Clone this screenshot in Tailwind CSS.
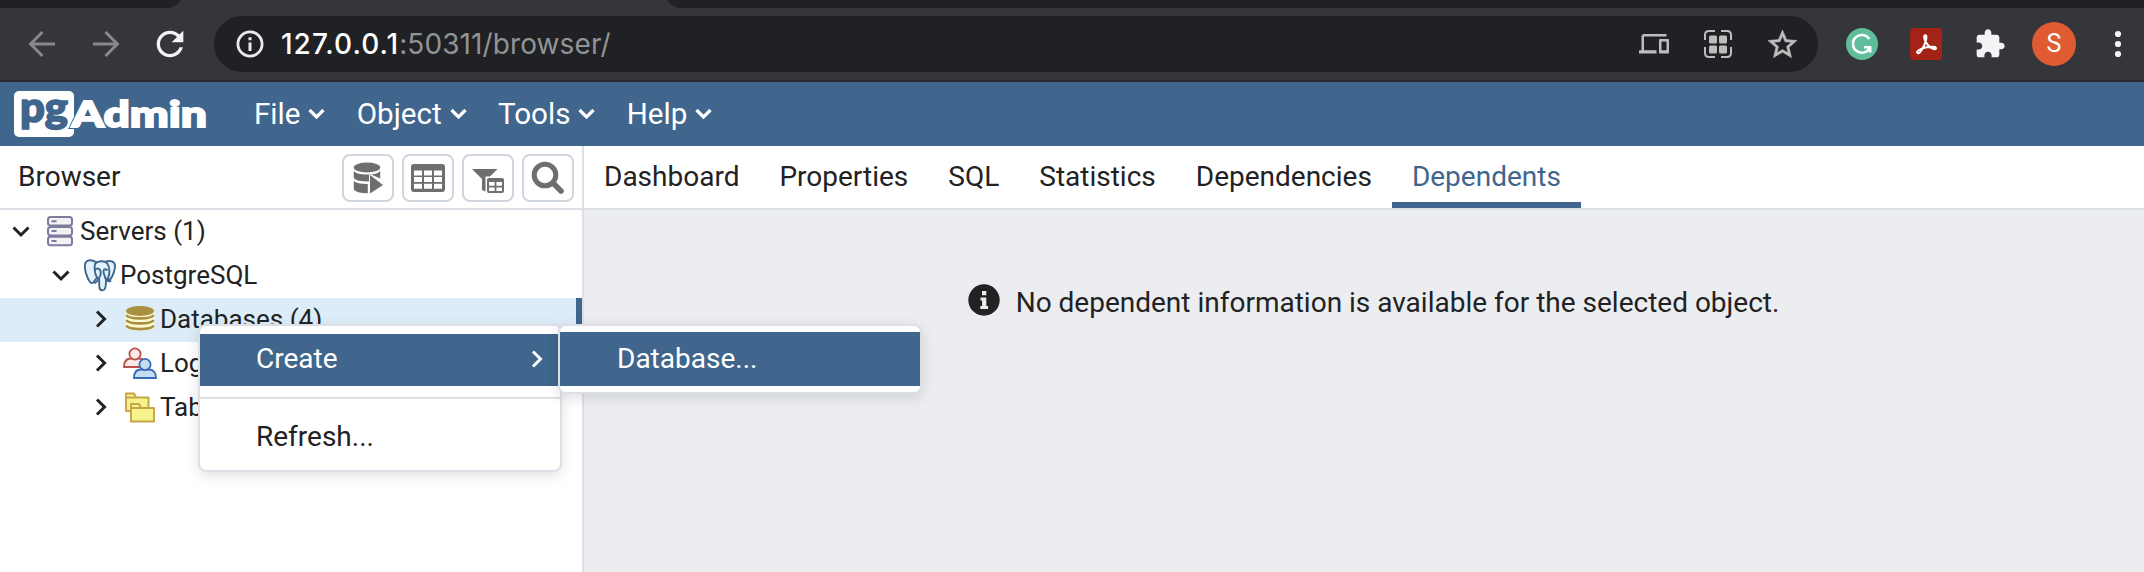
<!DOCTYPE html>
<html lang="en">
<head>
<meta charset="utf-8">
<title>pgAdmin 4</title>
<script src="https://cdn.jsdelivr.net/npm/@tailwindcss/browser@4"></script>
</head>
<body class="w-[2144px] h-[572px] overflow-hidden bg-white font-['Roboto',sans-serif] text-[28px] text-[#222222]">
<div class="relative flex h-[572px] flex-col">

  <!-- Browser tab strip -->
  <div class="flex h-2 shrink-0 justify-between overflow-hidden bg-[#35363a]">
    <div class="-mt-6 h-8 w-[183px] rounded-br-2xl bg-[#202124]"></div>
    <div class="-mt-6 h-8 w-[1479px] rounded-bl-2xl bg-[#202124]"></div>
  </div>

  <!-- Browser toolbar -->
  <div class="flex h-[74px] shrink-0 items-center border-b-2 border-[#292a2b] bg-[#35363a] pl-[10px]">
    <div class="flex w-16 justify-center"><svg class="size-8" viewBox="0 0 32 32" fill="none" stroke="#87888b" stroke-width="3"><path d="M29 16H5M16.500 4L4.600 16l11.900 12"/></svg></div>
    <div class="flex w-16 justify-center"><svg class="size-8" viewBox="0 0 32 32" fill="none" stroke="#87888b" stroke-width="3"><path d="M3 16h24M15.500 4l11.900 12-11.900 12"/></svg></div>
    <div class="flex w-16 justify-center"><svg class="size-10" viewBox="0 0 24 24" fill="#f1f3f4"><path d="M17.650 6.350C16.200 4.900 14.210 4 12 4c-4.420 0-7.990 3.580-7.990 8s3.570 8 7.990 8c3.730 0 6.840-2.550 7.730-6h-2.080c-.82 2.330-3.040 4-5.650 4-3.310 0-6-2.690-6-6s2.690-6 6-6c1.660 0 3.140.69 4.220 1.780L13 11h7V4l-2.350 2.350z"/></svg></div>
    <div class="ml-3 flex h-14 w-[1604px] items-center rounded-full bg-[#202124] pr-1 pl-[22px]">
      <svg class="size-[28px]" viewBox="0 0 28 28"><circle cx="14" cy="14" r="12.100" fill="none" stroke="#e8eaed" stroke-width="2.800"/><path d="M12.500 12.500h3V21h-3zM12.500 7.300h3v3h-3z" fill="#e8eaed"/></svg>
      <div class="ml-[17px] grow font-['Inter',sans-serif] text-[28px] leading-[56px] tracking-[0.1px] text-[#929396]"><span class="font-medium tracking-[1px] text-white">127.0.0.1</span>:50311/browser/</div>
      <div class="flex w-16 justify-center"><svg class="size-[30px]" viewBox="0 0 24 24" fill="#bdbdbd"><path d="M4 6h18V4H4c-1.100 0-2 .9-2 2v11H0v2.500h14V17H4V6zm19 2h-6c-.55 0-1 .45-1 1v9.500c0 .55.45 1 1 1h6c.55 0 1-.45 1-1V9c0-.55-.45-1-1-1zm-1 9h-4v-7h4v7z"/></svg></div>
      <div class="flex w-16 justify-center"><svg class="size-[30px]" viewBox="0 0 30 30"><path d="M2 11V6q0-4 4-4h6M18 2h6q4 0 4 4v5M28 18v6q0 4-4 4h-6M12 28H6q-4 0-4-4v-6" fill="none" stroke="#bdbdbd" stroke-width="2"/><g fill="#bdbdbd"><rect x="6" y="6.500" width="8" height="8" rx="1.500"/><rect x="16" y="6.500" width="8" height="8" rx="1.500"/><rect x="6" y="16.500" width="8" height="8" rx="1.500"/><rect x="16" y="16.500" width="8" height="8" rx="1.500"/></g></svg></div>
      <div class="flex w-16 justify-center"><svg class="size-[35px]" viewBox="0 0 24 24" fill="#bdbdbd" stroke="#bdbdbd" stroke-width=".35"><path d="M22 9.240l-7.190-.62L12 2 9.190 8.630 2 9.240l5.460 4.730L5.820 21 12 17.270 18.180 21l-1.630-7.030L22 9.240zM12 15.400l-3.760 2.270 1-4.280-3.320-2.880 4.380-.38L12 6.100l1.710 4.040 4.380.38-3.320 2.880 1 4.280L12 15.400z"/></svg></div>
    </div>
    <div class="ml-3 flex w-16 justify-center"><svg class="size-8" viewBox="0 0 32 32"><circle cx="16" cy="16" r="16" fill="#5fbd9c"/><path d="M23.300 11A8.900 8.900 0 1 0 24 19.300M18 19.200h6.200v5.400" fill="none" stroke="#fff" stroke-width="2.500"/></svg></div>
    <div class="flex w-16 justify-center"><svg class="size-8" viewBox="0 0 32 32"><rect width="32" height="32" rx="4" fill="#a32316"/><path d="M7.400 24.900c-1.400-1.700 2.600-4.200 9.200-5.600 5.900-1.200 9.700-.5 9.400 1.200-.5 2-5.600.1-9-4.600-3.300-4.500-3.400-8.700-1.700-8.600 2.200.1 1 5.900-1.700 11.200-2.400 4.900-5 7.800-6.200 6.400z" fill="none" stroke="#fff" stroke-width="2"/></svg></div>
    <div class="flex w-16 justify-center"><svg class="size-8" viewBox="0 0 24 24" fill="#f1f3f4"><path d="M20.500 11H19V7c0-1.100-.9-2-2-2h-4V3.500C13 2.120 11.880 1 10.500 1S8 2.120 8 3.500V5H4c-1.100 0-1.990.9-1.990 2v3.800H3.500c1.490 0 2.700 1.210 2.700 2.700s-1.210 2.700-2.700 2.700H2V20c0 1.100.9 2 2 2h3.800v-1.500c0-1.490 1.210-2.700 2.700-2.700 1.490 0 2.700 1.210 2.700 2.700V22H17c1.100 0 2-.9 2-2v-4h1.500c1.380 0 2.500-1.120 2.500-2.500S21.880 11 20.500 11z"/></svg></div>
    <div class="flex w-16 justify-center"><div class="size-11 rounded-full bg-[#e05b32] text-center text-[25px] leading-[44px] text-white">S</div></div>
    <div class="w-[58px] pl-7"><svg class="h-8 w-2" viewBox="0 0 8 32" fill="#f1f3f4"><circle cx="4" cy="6" r="3.100"/><circle cx="4" cy="16" r="3.100"/><circle cx="4" cy="26" r="3.100"/></svg></div>
  </div>

  <!-- pgAdmin menu bar -->
  <div class="flex h-16 shrink-0 items-center bg-[#40668d] pl-[14px] text-[29.6px] text-white">
    <svg class="h-[46px] w-[194px] shrink-0 overflow-visible" viewBox="0 0 194 46" font-family="Lato" font-weight="900">
      <rect width="60" height="46" rx="5" fill="#fff"/>
      <text x="6" y="30.500" font-size="41" textLength="48" lengthAdjust="spacingAndGlyphs" fill="#40668d" stroke="#40668d" stroke-width="1.600">pg</text>
      <path d="M54 38L68 9h5v29z" fill="#40668d"/>
      <text x="57.500" y="35.500" font-size="36.500" textLength="135.500" lengthAdjust="spacingAndGlyphs" fill="#fff" stroke="#fff" stroke-width="1.800">Admin</text>
    </svg>
    <nav class="ml-[46px] flex gap-[31.3px]">
      <div class="flex items-center gap-2">File<svg class="h-4 w-[17px]" viewBox="0 0 17 16" fill="none" stroke="#fff" stroke-width="3.200"><path d="M1.500 4L8.500 11l7-7"/></svg></div>
      <div class="flex items-center gap-2">Object<svg class="h-4 w-[17px]" viewBox="0 0 17 16" fill="none" stroke="#fff" stroke-width="3.200"><path d="M1.500 4L8.500 11l7-7"/></svg></div>
      <div class="flex items-center gap-2">Tools<svg class="h-4 w-[17px]" viewBox="0 0 17 16" fill="none" stroke="#fff" stroke-width="3.200"><path d="M1.500 4L8.500 11l7-7"/></svg></div>
      <div class="flex items-center gap-2">Help<svg class="h-4 w-[17px]" viewBox="0 0 17 16" fill="none" stroke="#fff" stroke-width="3.200"><path d="M1.500 4L8.500 11l7-7"/></svg></div>
    </nav>
  </div>

  <div class="flex grow">
    <!-- Object browser -->
    <aside class="flex w-[584px] shrink-0 flex-col border-r-2 border-[#dddfe6] bg-white">
      <div class="flex h-16 items-center gap-2 border-b-2 border-[#dddfe6] pr-2 pl-[18px]">
        <div class="grow">Browser</div>
        <div class="mt-0.5 flex h-12 w-[52px] items-center justify-center rounded-lg border-2 border-[#d0d6de]"><svg class="h-8 w-8" viewBox="0 0 32 32" fill="#6e6e6e"><ellipse cx="15" cy="5.500" rx="13.200" ry="5"/><path d="M1.800 9q2.500 3.600 13.200 3.600t13.200-3.600v7.500L17 11.600v8Q4 19.500 1.800 16z"/><path d="M1.800 19q2.500 3 14 3v9.300Q4 31 1.800 27.500z"/><path d="M18 13l13 10-13 8.500z" stroke="#fff" stroke-width="1.400" paint-order="stroke"/></svg></div>
        <div class="mt-0.5 flex h-12 w-[52px] items-center justify-center rounded-lg border-2 border-[#d0d6de]"><svg class="h-[28px] w-[34px]" viewBox="0 0 34 28"><rect width="34" height="28" rx="3" fill="#6e6e6e"/><g fill="#fff"><path d="M3 6.500h8v5H3zM13 6.500h8v5h-8zM23 6.500h8v5h-8zM3 13h8v5H3zM13 13h8v5h-8zM23 13h8v5h-8zM3 19.800h8v5H3zM13 19.800h8v5h-8zM23 19.800h8v5h-8z"/></g></svg></div>
        <div class="mt-0.5 flex h-12 w-[52px] items-center justify-center rounded-lg border-2 border-[#d0d6de]"><svg class="mt-1.5 h-6 w-8" viewBox="0 0 32 24"><path d="M0 0h25.500L15.500 10v13.500L10 21v-11z" fill="#6e6e6e"/><rect x="13.500" y="7.500" width="19" height="17" fill="#fff"/><rect x="15" y="9" width="17" height="15" rx="2" fill="#6e6e6e"/><path d="M17 13h5.600v3.700H17zM24.400 13H30v3.700h-5.600zM17 18.400h5.600v3.700H17zM24.400 18.400H30v3.700h-5.600z" fill="#fff"/></svg></div>
        <div class="mt-0.5 flex h-12 w-[52px] items-center justify-center rounded-lg border-2 border-[#d0d6de]"><svg class="h-[34px] w-[34px]" viewBox="0 0 34 34" fill="none" stroke="#6e6e6e"><circle cx="14" cy="14" r="10.800" stroke-width="5"/><path d="M22 22l8 8" stroke-width="5.500" stroke-linecap="round"/></svg></div>
      </div>
      <div class="flex flex-col text-[26px] leading-[42px]">
        <div class="flex h-11 items-center pb-0.5 pl-3"><svg class="size-[18px]" viewBox="0 0 18 18" fill="none" stroke="#222" stroke-width="3"><path d="M1.500 5.500L9 13l7.500-7.500"/></svg>
          <svg class="ml-4 h-[32px] w-7" viewBox="0 0 28 32" fill="#f2f2f4" stroke="#7d7c9c" stroke-width="2"><rect x="2" y="2" width="24" height="8.500" rx="2.500"/><rect x="2" y="11.900" width="24" height="8.500" rx="2.500"/><rect x="2" y="21.700" width="24" height="8.500" rx="2.500"/><path d="M5.500 6.200h5M5.500 16.100h5M5.500 26h5"/></svg><span class="ml-[6px]">Servers (1)</span></div>
        <div class="flex h-11 items-center pb-0.5 pl-[52px]"><svg class="size-[18px]" viewBox="0 0 18 18" fill="none" stroke="#222" stroke-width="3"><path d="M1.500 5.500L9 13l7.500-7.500"/></svg>
          <svg class="ml-[13px] size-[34px]" viewBox="0 0 34 34" fill="#e1f2fb" stroke="#40668d" stroke-width="1.900" stroke-linejoin="round" stroke-linecap="round"><path d="M13 4C8 1 3 2 2 6c-1 5 2 14 5 18 1.500 2 3 1 4-.5l3-4z"/><path d="M22 4c5-2 10-1 10 4 0 6-3 11-5 14l-6-2z"/><path d="M12 6c2-3 9-4 12-1 3 4 3 11 1 15l-2 1.500c0 4 0 7-1 9-1 2.500-5 2.500-5.500-.5-.7-3 .2-6-.5-9-4-1.500-5-11-4-15z"/><path d="M12 12c1-2 4-2 5 0s1 5-1 8c-1 2-1 3-4 5M24 12c-1-1-3-1-3.500.5-.5 3 1.500 5 2 8 1 2 3 3 5 2.500" fill="none"/></svg><span class="ml-[3px]">PostgreSQL</span></div>
        <div class="flex h-11 items-center border-r-[6px] border-[#40668d] bg-[#dcedf9] pb-0.5 pl-[92px]"><svg class="size-[18px]" viewBox="0 0 18 18" fill="none" stroke="#222" stroke-width="3"><path d="M5 1.500L12.500 9 5 16.500"/></svg>
          <svg class="ml-[15px] h-[28px] w-[30px]" viewBox="0 0 30 28"><path d="M1 6v16c1 5 27 5 28 0V6z" fill="#fdf8d0"/><ellipse cx="15" cy="6" rx="14" ry="5" fill="#a98f40"/><path d="M1.500 10c2 4.500 25 4.500 27 0M1.500 15c2 4.500 25 4.500 27 0M1.500 20.500c2 4.800 25 4.800 27 0" fill="none" stroke="#a98f40" stroke-width="2.600"/></svg><span class="ml-[5px]">Databases (4)</span></div>
        <div class="flex h-11 items-center pb-0.5 pl-[92px]"><svg class="size-[18px]" viewBox="0 0 18 18" fill="none" stroke="#222" stroke-width="3"><path d="M5 1.500L12.500 9 5 16.500"/></svg>
          <svg class="ml-[13px] size-[34px]" viewBox="0 0 34 34" stroke-width="1.800"><g fill="#fbe9e8" stroke="#b8504c"><path d="M1 21c0-6 3-8.500 7-8.500h8c4 0 6 3 6 8.500z"/><circle cx="12" cy="8" r="5.600"/></g><g fill="#c5dcee" stroke="#3a68bd"><path d="M11 32c0-6 3-8.500 7-8.500h8c4 0 7 3 7 8.500z"/><circle cx="22" cy="18.500" r="5.600"/></g></svg><span class="ml-[3px]">Log</span></div>
        <div class="flex h-11 items-center pb-0.5 pl-[92px]"><svg class="size-[18px]" viewBox="0 0 18 18" fill="none" stroke="#222" stroke-width="3"><path d="M5 1.500L12.500 9 5 16.500"/></svg>
          <svg class="ml-[14px] size-8" viewBox="0 0 32 32" fill="#f6f28e" stroke="#c6a544" stroke-width="1.900" stroke-linejoin="round"><path d="M2 20V2.500h8l2 4h12.500V20z"/><path d="M2 6.500h10" fill="none"/><path d="M7 30.500V13h8l2 4h13v13.500z"/><path d="M7 17h10" fill="none"/></svg><span class="ml-[4px]">Tab</span></div>
      </div>
    </aside>

    <!-- Main panel -->
    <main class="flex grow flex-col bg-[#ecedf1]">
      <div class="flex h-16 border-b-2 border-[#dddfe6] bg-white leading-[62px]">
        <div class="px-5">Dashboard</div>
        <div class="px-5">Properties</div>
        <div class="px-5">SQL</div>
        <div class="px-5">Statistics</div>
        <div class="px-5">Dependencies</div>
        <div class="h-[62px] border-b-[6px] border-[#40668d] px-5 text-[#40668d]">Dependents</div>
      </div>
      <div class="flex items-start justify-center pt-[72px] pl-[19px]">
        <svg class="mt-[2px] mr-4 size-8" viewBox="0 0 32 32"><circle cx="16" cy="16" r="15.700" fill="#222"/><path d="M12.500 13.500h5.800v8.500h1.800v3h-7.800v-3h1.800v-5.500h-1.600zM14 7h4.300v4.300H14z" fill="#ecedf1"/></svg>
        <span class="leading-[42px]">No dependent information is available for the selected object.</span>
      </div>
    </main>
  </div>

  <!-- Context menu -->
  <div class="absolute top-[324px] left-[198px] flex h-[148px] w-[364px] flex-col rounded-lg border-2 border-[#dddfe6] bg-white pt-2 shadow-[0_4px_14px_rgba(0,0,0,0.12)]">
    <div class="flex h-[52px] items-center justify-between bg-[#40668d] pr-[14px] pb-0.5 pl-14 text-white">Create<svg class="size-[18px]" viewBox="0 0 18 18" fill="none" stroke="#fff" stroke-width="3"><path d="M5 1.500L12.500 9 5 16.500"/></svg></div>
    <div class="mt-[11px] h-0.5 bg-[#dddfe6]"></div>
    <div class="mt-[13px] flex h-[50px] items-center pl-14">Refresh...</div>
  </div>
  <div class="absolute top-[324px] left-[558px] flex h-[70px] w-[364px] flex-col rounded-lg border-2 border-[#dddfe6] bg-white pt-1.5 shadow-[0_4px_14px_rgba(0,0,0,0.12)]">
    <div class="flex h-[54px] items-center bg-[#40668d] pl-[57px] text-white">Database...</div>
  </div>
</div>
</body>
</html>
